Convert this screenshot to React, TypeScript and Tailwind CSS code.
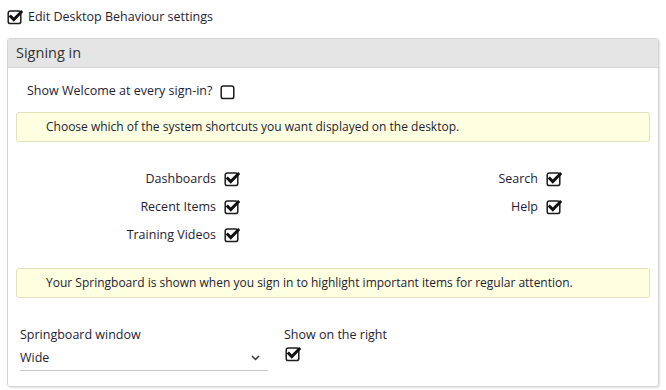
import React from "react";

function Check({ checked = true }: { checked?: boolean }) {
  return (
    <svg width="16" height="16" viewBox="0 0 16 16" className="shrink-0">
      <rect x="1.2" y="2" width="12.6" height="12.6" rx="2.2" fill="none" stroke="#1d1d1d" strokeWidth="1.5" />
      {checked && (
        <path d="M3.8 7.6 L6.8 10.6 L14.2 3" fill="none" stroke="#111" strokeWidth="3" strokeLinecap="square" />
      )}
    </svg>
  );
}

function Shortcut({ label }: { label: string }) {
  return (
    <div className="flex items-center justify-end gap-[8px] h-[28px]">
      <span>{label}</span>
      <Check />
    </div>
  );
}

function Note({ children }: { children: React.ReactNode }) {
  return (
    <div className="h-[30px] flex items-center pl-[29px] bg-[#fefee0] border border-[#e2e2bc] rounded-[3px] text-[12px]">
      {children}
    </div>
  );
}

export default function App() {
  return (
    <div
      className="w-[666px] h-[390px] bg-white text-[12.5px] text-[#1f2233] overflow-hidden"
      style={{ fontFamily: '"Open Sans", sans-serif' }}
    >
      {/* Toggle */}
      <div className="flex items-center gap-[5px] pl-[7px] pt-[5px] h-[24px] box-content">
        <Check />
        <span>Edit Desktop Behaviour settings</span>
      </div>

      {/* Panel */}
      <div className="mx-[7px] mt-[9px] border border-[#d4d4d4] rounded-[3px] shadow-[1px_1px_2px_rgba(0,0,0,0.12)] h-[349px]">
        <div className="h-[29px] bg-[#e5e5e5] border-b border-[#d8d8d8] flex items-center px-[8px] text-[14.5px] text-[#333]">
          Signing in
        </div>

        <div className="px-[8px]">
          <div className="flex items-center gap-[8px] pl-[11px] h-[44px] pt-[3px]">
            <span>Show Welcome at every sign-in?</span>
            <Check checked={false} />
          </div>

          <Note>Choose which of the system shortcuts you want displayed on the desktop.</Note>

          <div className="grid grid-cols-[224px_322px] mt-[23px]">
            <div className="flex flex-col">
              <Shortcut label="Dashboards" />
              <Shortcut label="Recent Items" />
              <Shortcut label="Training Videos" />
            </div>
            <div className="flex flex-col">
              <Shortcut label="Search" />
              <Shortcut label="Help" />
            </div>
          </div>

          <div className="mt-[19px]">
            <Note>Your Springboard is shown when you sign in to highlight important items for regular attention.</Note>
          </div>

          <div className="flex gap-[16px] mt-[28px] pl-[4px]">
            <div className="w-[248px]">
              <div className="h-[18px] leading-[18px]">Springboard window</div>
              <div className="flex items-center justify-between h-[27px] pt-[2px] border-b border-[#c8c8c8] pr-[8px]">
                <span>Wide</span>
                <svg width="9" height="6" viewBox="0 0 9 6">
                  <path d="M1 1 L4.5 4.5 L8 1" fill="none" stroke="#333" strokeWidth="1.5" />
                </svg>
              </div>
            </div>
            <div>
              <div className="h-[18px] leading-[18px]">Show on the right</div>
              <div className="pt-[2px] pl-[1px]">
                <Check />
              </div>
            </div>
          </div>
        </div>
      </div>
    </div>
  );
}
